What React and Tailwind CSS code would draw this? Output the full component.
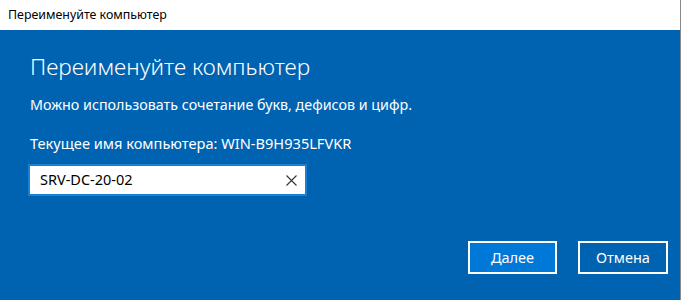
export default function App() {
  const font = { fontFamily: '"Segoe UI", "Noto Sans", "Open Sans", sans-serif' };
  return (
    <div className="w-[681px] h-[300px] flex flex-col border-r border-[#8a8a8a] overflow-hidden" style={font}>
      <div className="h-[30px] bg-white flex items-center pl-[8px] text-[12.4px] text-black shrink-0">
        Переименуйте компьютер
      </div>
      <div className="flex-1 bg-[#0063b1] text-white pl-[30px] pr-[12px] flex flex-col">
        <div className="mt-[21px] text-[22.6px] font-light leading-[32px]">Переименуйте компьютер</div>
        <div className="mt-[12px] text-[14.3px] leading-[20px]">Можно использовать сочетание букв, дефисов и цифр.</div>
        <div className="mt-[18px] text-[14.6px] leading-[20px]">Текущее имя компьютера: WIN-B9H935LFVKR</div>
        <div className="mt-[11px] -ml-[2px] w-[279px] h-[32px] border-2 border-[#1a7fd6] bg-white flex items-center pl-[10px] pr-[8px]">
          <span className="flex-1 text-[14.5px] text-black">SRV-DC-20-02</span>
          <svg width="11" height="11" viewBox="0 0 11 11" className="shrink-0">
            <path d="M0.5 0.5 L10.5 10.5 M10.5 0.5 L0.5 10.5" stroke="#333" strokeWidth="1.1" fill="none" />
          </svg>
        </div>
        <div className="mt-auto mb-[26px] flex justify-end gap-[21px] pr-0">
          <button className="w-[89px] h-[33px] border-2 border-white bg-[#0078d7] text-white text-[14.5px]">Далее</button>
          <button className="w-[90px] h-[33px] border-2 border-white bg-[#0063b1] text-white text-[14.5px]">Отмена</button>
        </div>
      </div>
    </div>
  );
}
